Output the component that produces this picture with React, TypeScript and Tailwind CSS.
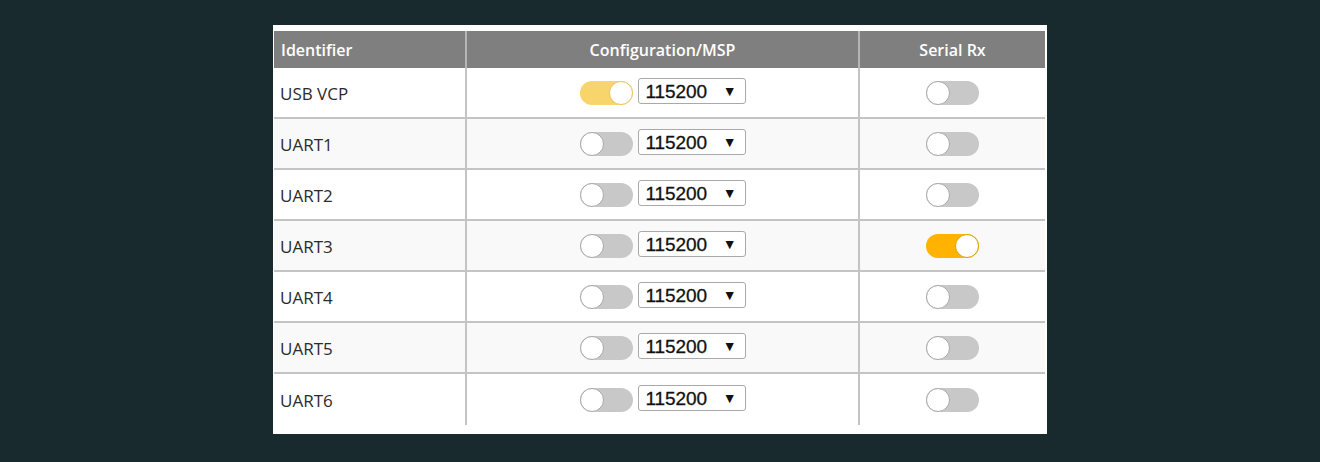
import React from 'react';

type Row = { id: string; msp: boolean; mspDim?: boolean; rx: boolean };

const rows: Row[] = [
  { id: 'USB VCP', msp: true, mspDim: true, rx: false },
  { id: 'UART1', msp: false, rx: false },
  { id: 'UART2', msp: false, rx: false },
  { id: 'UART3', msp: false, rx: true },
  { id: 'UART4', msp: false, rx: false },
  { id: 'UART5', msp: false, rx: false },
  { id: 'UART6', msp: false, rx: false },
];

function Toggle({ on, dim }: { on: boolean; dim?: boolean }) {
  if (on) {
    return (
      <div
        className={
          'relative w-[53px] h-[24px] rounded-full ' + (dim ? 'bg-[#f8d56c]' : 'bg-[#ffb300]')
        }
      >
        <div
          className={
            'absolute right-0 top-0 w-[24px] h-[24px] rounded-full bg-white border ' +
            (dim ? 'border-[#e9c45a]' : 'border-[#d9a000]')
          }
        />
      </div>
    );
  }
  return (
    <div className="relative w-[53px] h-[24px] rounded-full bg-[#c8c8c8]">
      <div className="absolute left-0 top-0 w-[24px] h-[24px] rounded-full bg-white border border-[#a8a8a8]" />
    </div>
  );
}

function BaudSelect() {
  return (
    <div className="w-[108px] h-[26px] mb-[3px] border border-[#a9a9a9] rounded-[3px] bg-white flex items-center justify-between pl-[7px] pr-[8px] font-['Liberation_Sans',Arial,sans-serif]">
      <span className="text-[19px] leading-none text-[#111] tracking-[-0.1px] [-webkit-text-stroke:0.3px_#111]">
        115200
      </span>
      <span className="text-[14px] leading-none text-[#111]">▼</span>
    </div>
  );
}

export default function App() {
  return (
    <div className="w-[1320px] h-[462px] bg-[#182a2e] pt-[25px] pl-[273px]">
      <div className="w-[774px] h-[409px] bg-white pt-[6px] pl-[1px] pr-[2px] font-['Open_Sans','Noto_Sans',sans-serif]">
        <div className="flex h-[37px] bg-[#7f7f7f] text-white text-[16px] font-semibold">
          <div className="w-[193px] flex items-center pl-[7px] border-r-2 border-[#b5b5b5]">Identifier</div>
          <div className="w-[393px] flex items-center justify-center border-r-2 border-[#b5b5b5]">
            Configuration/MSP
          </div>
          <div className="flex-1 flex items-center justify-center">Serial Rx</div>
        </div>
        {rows.map((r, i) => (
          <div
            key={r.id}
            className={
              'flex h-[51px] ' +
              (i < rows.length - 1 ? 'border-b-2 border-[#c4c4c4] ' : '') +
              (i % 2 === 1 ? 'bg-[#f9f9f9]' : 'bg-white')
            }
          >
            <div className="w-[193px] flex items-center pl-[6px] pt-[3px] text-[17px] text-[#2b2b2b] border-r-2 border-[#c4c4c4]">
              {r.id}
            </div>
            <div className="w-[393px] flex items-center justify-center gap-[5px] border-r-2 border-[#c4c4c4]">
              <Toggle on={r.msp} dim={r.mspDim} />
              <BaudSelect />
            </div>
            <div className="flex-1 flex items-center justify-center">
              <Toggle on={r.rx} />
            </div>
          </div>
        ))}
      </div>
    </div>
  );
}
